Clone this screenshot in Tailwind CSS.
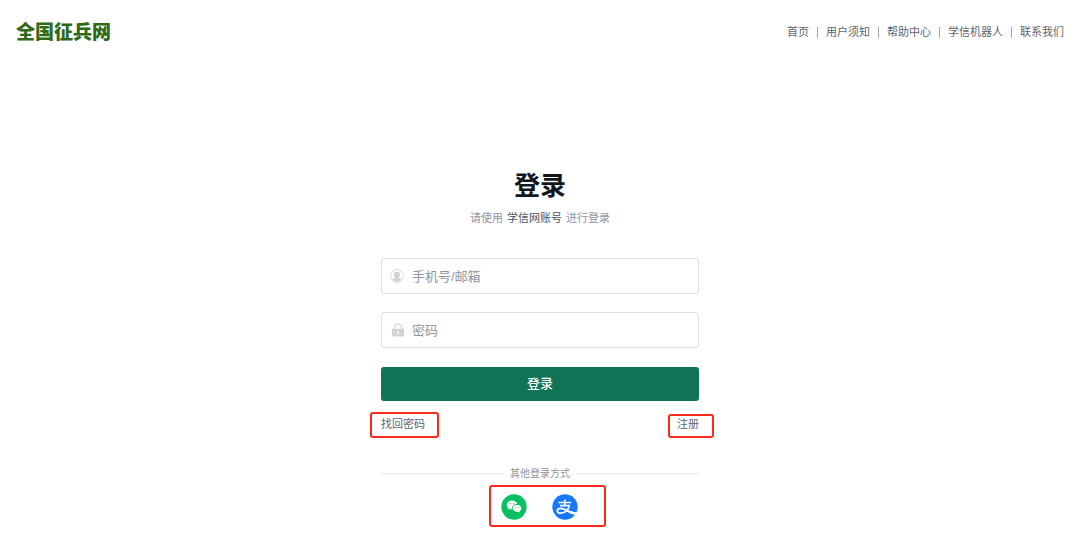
<!DOCTYPE html>
<html lang="zh-CN">
<head>
  <meta charset="UTF-8" />
  <meta name="viewport" content="width=device-width, initial-scale=1.0" />
  <title>登录 - 全国征兵网</title>
  <script src="https://cdn.jsdelivr.net/npm/@tailwindcss/browser@4"></script>
</head>
<body class="bg-white min-h-screen text-[11px] text-[#5f6570] font-['Liberation_Sans','Noto_Sans_CJK_SC',sans-serif]">
  <header class="flex h-16 items-center justify-between px-4">
    <h1 class="pt-[2px]"><a href="#" class="block text-[19px] leading-6 font-black text-[#2f6a16]">全国征兵网</a></h1>
    <nav class="flex items-center divide-x divide-[#a3a7ae] leading-[11px]">
      <a href="#" class="pr-2">首页</a>
      <a href="#" class="px-2">用户须知</a>
      <a href="#" class="px-2">帮助中心</a>
      <a href="#" class="px-2">学信机器人</a>
      <a href="#" class="pl-2">联系我们</a>
    </nav>
  </header>

  <main class="mx-auto w-full max-w-[318px] pt-[106px]">
    <h2 class="text-center text-[26px] leading-8 font-bold text-[#12171d]">登录</h2>
    <p class="mt-2 flex justify-center gap-1 leading-4 text-[#8f959f]">
      <span>请使用</span><span class="text-[#4e545e]">学信网账号</span><span>进行登录</span>
    </p>

    <form class="mt-8" onsubmit="return false">
      <div class="relative">
        <label for="username" class="absolute left-[9px] top-[11px]" aria-label="手机号/邮箱">
          <svg class="size-[14px]" viewBox="0 0 14 14" fill="none">
            <circle cx="7" cy="7" r="6.4" stroke="#d5d7dc" stroke-width="1" />
            <path d="M7 2.700c2 0 3 1.200 3 3 0 1.300-.6 2.300-1.300 2.900v.5l3 1.200A5.700 5.700 0 0 1 7 12.900a5.700 5.700 0 0 1-4.700-2.600l3-1.200v-.5C4.600 8 4 7 4 5.700c0-1.800 1-3 3-3z" fill="#d0d3d8" />
          </svg>
        </label>
        <input id="username" type="text" placeholder="手机号/邮箱" class="block h-9 w-full rounded-[3px] border border-[#dcdee2] pl-[30px] pr-3 text-[13px] text-[#4e545e] placeholder:text-[#8f959f]" />
      </div>

      <div class="relative mt-[18px]">
        <label for="password" class="absolute left-[10px] top-[11px]" aria-label="密码">
          <svg class="size-[14px]" viewBox="0 0 14 14">
            <path d="M3.500 6V4.600a3.500 3.500 0 0 1 7 0V6" fill="none" stroke="#d5d7dc" stroke-width="1.200" />
            <path d="M1.600 5.800h10.800c.4 0 .6.200.6.600v6.400c0 .4-.2.600-.6.600H1.600c-.4 0-.6-.2-.6-.6V6.400c0-.4.200-.6.600-.6z" fill="#d0d3d8" />
            <path d="M7 8a1 1 0 0 1 .6 1.800v1.700H6.400V9.800A1 1 0 0 1 7 8z" fill="#fff" />
          </svg>
        </label>
        <input id="password" type="password" placeholder="密码" class="block h-9 w-full rounded-[3px] border border-[#dcdee2] pl-[30px] pr-3 text-[13px] text-[#4e545e] placeholder:text-[#8f959f]" />
      </div>

      <button type="submit" class="mt-[19px] block h-[34px] w-full rounded-[3px] bg-[#0f7355] text-[13px] font-medium text-white">登录</button>
    </form>

    <div class="mt-[15px] flex justify-between leading-4">
      <a href="#" class="relative">
        找回密码
        <span class="absolute -left-[11px] -right-[14px] -top-1 h-[26px] rounded-[3px] border-2 border-[#fb2a1c]"></span>
      </a>
      <a href="#" class="relative">
        注册
        <span class="absolute -left-[9px] -right-[15px] -top-[2px] h-6 rounded-[3px] border-2 border-[#fb2a1c]"></span>
      </a>
    </div>

    <div class="mt-8 flex items-center gap-[6px] text-[10px] leading-4 text-[#8f959f]">
      <span class="h-px flex-1 bg-[#e8e9ec]"></span>
      <span class="pt-[2px]">其他登录方式</span>
      <span class="h-px flex-1 bg-[#e8e9ec]"></span>
    </div>

    <div class="mt-3 flex justify-center">
      <div class="relative mr-[2px] flex gap-[25px]">
        <a href="#" aria-label="微信登录">
          <svg class="size-[26px]" viewBox="0 0 26 26">
            <circle cx="13" cy="13" r="12.700" fill="#07c160" />
            <path d="M10.900 6.600c-2.900 0-5.200 1.900-5.200 4.300 0 1.400.8 2.600 2 3.400l-.5 1.500 1.800-.9c.6.200 1.200.3 1.900.3h.4a4 4 0 0 1-.2-1.100c0-2.300 2.100-4.100 4.800-4.100h.2c-.5-1.900-2.600-3.400-5.200-3.400z" fill="#fff" />
            <path d="M16 10.700c-2.400 0-4.300 1.600-4.300 3.600s1.900 3.600 4.300 3.600c.5 0 1-.1 1.500-.2l1.400.8-.4-1.300c1.100-.7 1.800-1.700 1.800-2.900 0-2-1.900-3.600-4.300-3.600z" fill="#fff" />
            <g fill="#07c160">
              <circle cx="9.200" cy="9.700" r=".6" /><circle cx="12.600" cy="9.700" r=".6" />
              <circle cx="14.600" cy="13.300" r=".5" /><circle cx="17.400" cy="13.300" r=".5" />
            </g>
          </svg>
        </a>
        <a href="#" aria-label="支付宝登录">
          <svg class="size-[26px]" viewBox="0 0 26 26">
            <circle cx="13" cy="13" r="12.700" fill="#1677ff" />
            <g fill="none" stroke="#fff">
              <path d="M6.500 8.500h12.600M8 11.700h10M12.800 5.500v6.200" stroke-width="1.700" />
              <path d="M17.400 11.600c-.8 3.400-4 7.600-8.400 7.600-2.300 0-3.700-1-3.700-2.500s1.400-2.400 3.300-2.400c3.400 0 7 2.600 11.400 4.100" stroke-width="1.700" />
            </g>
            <path d="M14.500 15.700c3 1 6.300 2.300 10.500 2.700l-1.600 2.700c-3.700-.9-6.700-2.400-9.600-3.900z" fill="#fff" />
          </svg>
        </a>
        <span class="pointer-events-none absolute -left-3 -right-[28px] -top-[9px] h-[42px] rounded-[3px] border-2 border-[#fb2a1c]"></span>
      </div>
    </div>
  </main>
</body>
</html>
